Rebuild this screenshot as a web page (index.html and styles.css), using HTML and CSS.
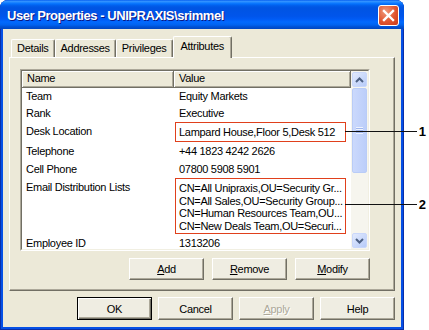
FILE: index.html
```html
<!DOCTYPE html>
<html lang="en">
<head>
  <meta charset="UTF-8" />
  <meta name="viewport" content="width=device-width, initial-scale=1.0"/>
  <title>User Properties - UNIPRAXIS\srimmel</title>
  <link rel="stylesheet" href="styles.css">
</head>
<body>

  <div class="window">
    <div class="titlebar">
      <span class="title">User Properties - UNIPRAXIS\srimmel</span>
      <span class="close-btn">
        <svg width="19" height="19" viewBox="0 0 19 19">
          <path d="M5 5 L14 14 M14 5 L5 14" stroke="#fff" stroke-width="2.4" stroke-linecap="square"/>
        </svg>
      </span>
    </div>

    <div class="client">
      <div class="tabs">
        <span class="tab">Details</span>
        <span class="tab">Addresses</span>
        <span class="tab">Privileges</span>
        <span class="tab active">Attributes</span>
      </div>

      <div class="panel">
        <div class="listview">
          <div class="list-inner">
            <div class="list-table">
              <div class="list-header">
                <span class="head-cell">Name</span>
                <span class="head-cell">Value</span>
              </div>
              <div class="row"><span class="cell-name">Team</span><span class="cell-value">Equity Markets</span></div>
              <div class="row"><span class="cell-name">Rank</span><span class="cell-value">Executive</span></div>
              <div class="row row-desk"><span class="cell-name">Desk Location</span><span class="cell-value boxed">Lampard House,Floor 5,Desk 512</span></div>
              <div class="row row-tel"><span class="cell-name">Telephone</span><span class="cell-value">+44 1823 4242 2626</span></div>
              <div class="row"><span class="cell-name">Cell Phone</span><span class="cell-value">07800 5908 5901</span></div>
              <div class="row row-email">
                <span class="cell-name">Email Distribution Lists</span>
                <span class="cell-value boxed multi">
                  <span class="line">CN=All Unipraxis,OU=Security Gr...</span>
                  <span class="line">CN=All Sales,OU=Security Group...</span>
                  <span class="line">CN=Human Resources Team,OU...</span>
                  <span class="line">CN=New Deals Team,OU=Securi...</span>
                </span>
              </div>
              <div class="row row-last"><span class="cell-name">Employee ID</span><span class="cell-value">1313206</span></div>
            </div>

            <div class="scrollbar">
              <span class="arrow-btn">
                <svg width="9" height="6" viewBox="0 0 9 6"><path d="M1 5 L4.5 1.5 L8 5" fill="none" stroke="#4d6185" stroke-width="2"/></svg>
              </span>
              <span class="thumb"><span class="grip"></span></span>
              <span class="track"></span>
              <span class="arrow-btn">
                <svg width="9" height="6" viewBox="0 0 9 6"><path d="M1 1 L4.5 4.5 L8 1" fill="none" stroke="#4d6185" stroke-width="2"/></svg>
              </span>
            </div>
          </div>
        </div>

        <div class="list-buttons">
          <button class="btn"><u>A</u>dd</button>
          <button class="btn"><u>R</u>emove</button>
          <button class="btn"><u>M</u>odify</button>
        </div>
      </div>

      <div class="dialog-buttons">
        <button class="btn default">OK</button>
        <button class="btn">Cancel</button>
        <button class="btn disabled"><u>A</u>pply</button>
        <button class="btn">Help</button>
      </div>
    </div>
  </div>

  <div class="callout callout-1"><span class="callout-line"></span><span class="callout-num">1</span></div>
  <div class="callout callout-2"><span class="callout-line"></span><span class="callout-num">2</span></div>

</body>
</html>
```

FILE: styles.css
```css
* {
  box-sizing: border-box;
}

body {
  margin: 0;
  width: 429px;
  height: 330px;
  overflow: hidden;
  position: relative;
  background: #fff;
  font-family: "Liberation Sans", Arial, sans-serif;
  font-size: 11px;
  letter-spacing: -0.3px;
  color: #000;
}

.window {
  width: 404px;
  height: 330px;
  display: flex;
  flex-direction: column;
  background: #0550e6;
  border-radius: 8px 8px 0 0;
  box-shadow: inset 1px 0 #0a2fa8, inset -1px 0 #0a2fa8, inset 0 -1px #0a2fa8;
}

.titlebar {
  height: 29px;
  display: flex;
  justify-content: space-between;
  align-items: flex-start;
  padding: 5px 5px 0 7px;
  border-radius: 8px 8px 0 0;
  background: linear-gradient(180deg, #0058ee 0%, #3593ff 4%, #288eff 7%, #127dff 10%, #036ffc 14%, #0262ee 18%, #0057e5 24%, #0054e3 30%, #0055eb 56%, #005bf5 66%, #026afe 76%, #0062ef 86%, #0052d6 92%, #0046c0 100%);
}

.title {
  color: #fff;
  font-weight: bold;
  font-size: 13px;
  letter-spacing: -0.45px;
  line-height: 20px;
  padding-top: 1px;
  text-shadow: 1px 1px #0a1883;
}

.close-btn {
  width: 21px;
  height: 21px;
  display: flex;
  align-items: center;
  justify-content: center;
  border: 1px solid #fff;
  border-radius: 3px;
  background: radial-gradient(circle at 35% 30%, #f09a7c, #e0552f 55%, #c8391a);
}

.client {
  flex: 1;
  margin: 0 3px 3px;
  padding: 7px 6px 0 6px;
  background: #ece9d8;
}

.tabs {
  height: 22px;
  display: flex;
  align-items: flex-start;
  padding-left: 2px;
}

.tab {
  height: 18px;
  margin-top: 3px;
  padding: 0 5px;
  line-height: 17px;
  border-top: 1px solid #fff;
  border-left: 1px solid #fff;
  border-right: 1px solid #716f64;
  border-radius: 2px 2px 0 0;
  box-shadow: inset -1px 0 #aca899;
  white-space: nowrap;
}

.tab.active {
  height: 22px;
  margin-top: 0;
  padding: 0 7px;
  line-height: 19px;
  background: #ece9d8;
  position: relative;
  z-index: 1;
}

.panel {
  width: 386px;
  height: 234px;
  margin-top: -1px;
  padding: 11px 0 0 10px;
  border: 1px solid;
  border-color: #fff #716f64 #716f64 #fff;
  box-shadow: inset -1px -1px #aca899;
}

.listview {
  width: 350px;
  height: 182px;
  border: 1px solid;
  border-color: #aca899 #fff #fff #aca899;
}

.list-inner {
  height: 100%;
  display: flex;
  border: 1px solid;
  border-color: #716f64 #f1efe2 #f1efe2 #716f64;
}

.list-table {
  flex: 1;
  background: #fff;
  overflow: hidden;
}

.list-header,
.row {
  display: grid;
  grid-template-columns: 152px 1fr;
}

.head-cell {
  height: 17px;
  line-height: 15px;
  padding-left: 5px;
  background: #ece9d8;
  border-right: 1px solid #716f64;
  border-bottom: 1px solid #716f64;
  box-shadow: inset 1px 1px #fff, inset -1px -1px #aca899;
}

.row {
  line-height: 17px;
}

.cell-name {
  padding-left: 4px;
  white-space: nowrap;
}

.cell-value {
  padding-left: 5px;
  white-space: nowrap;
  overflow: hidden;
}

.boxed {
  width: 171px;
  margin-left: 1px;
  padding-left: 3px;
  border: 1px solid #e0401c;
}

.row-desk {
  line-height: 18px;
}

.row-tel {
  line-height: 19px;
}

.row-email .cell-name {
  line-height: 12.6px;
  padding-top: 3px;
}

.multi {
  display: flex;
  flex-direction: column;
  padding-top: 3px;
  padding-bottom: 1px;
}

.multi .line {
  line-height: 12.6px;
}

.row-last {
  line-height: 19px;
}

.scrollbar {
  width: 17px;
  display: flex;
  flex-direction: column;
  gap: 1px;
  padding: 1px;
  background: #f6f5ee;
}

.arrow-btn {
  height: 15px;
  display: flex;
  align-items: center;
  justify-content: center;
  border: 1px solid #c9d7fb;
  border-radius: 2px;
  background: linear-gradient(135deg, #e2eafd, #b7cbf9);
}

.thumb {
  height: 85px;
  display: flex;
  align-items: center;
  justify-content: center;
  border: 1px solid #b9ccf7;
  border-radius: 2px;
  background: linear-gradient(90deg, #cbd9fc, #bccefa);
}

.grip {
  width: 7px;
  height: 7px;
  background: repeating-linear-gradient(180deg, #eef3fe 0 1px, #9fb6ee 1px 2px);
}

.track {
  flex: 1;
}

.list-buttons {
  width: 350px;
  margin-top: 7px;
  display: flex;
  justify-content: flex-end;
  gap: 8px;
}

.dialog-buttons {
  margin-top: 6px;
  display: flex;
  justify-content: flex-end;
  gap: 6px;
}

.btn {
  width: 75px;
  height: 22px;
  padding: 0;
  font-family: inherit;
  font-size: 11px;
  letter-spacing: -0.3px;
  color: #000;
  background: #efede2;
  border: 1px solid;
  border-color: #fff #716f64 #716f64 #fff;
  box-shadow: inset -1px -1px #aca899;
}

.dialog-buttons .btn {
  height: 23px;
}

.btn.default {
  border-color: #000;
  box-shadow: inset 1px 1px #fff, inset -1px -1px #716f64, inset -2px -2px #aca899;
}

.btn.disabled {
  color: #aca899;
  text-shadow: 1px 1px #fff;
}

.callout {
  position: absolute;
  left: 345px;
  width: 81px;
  height: 14px;
  display: flex;
  align-items: center;
}

.callout-1 {
  top: 124px;
}

.callout-2 {
  top: 197px;
}

.callout-line {
  flex: 1;
  height: 1px;
  background: #111;
}

.callout-num {
  margin-left: 2px;
  font-size: 13px;
  font-weight: bold;
  letter-spacing: 0;
}
```
